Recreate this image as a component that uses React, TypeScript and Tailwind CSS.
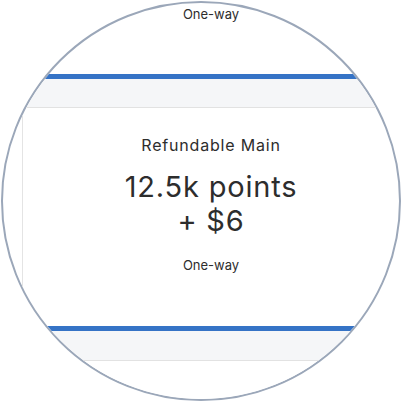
export default function App() {
  const font = { fontFamily: "Inter, 'Noto Sans', sans-serif" };
  return (
    <div className="h-[402px] w-[402px] bg-white p-px" style={font}>
      <div className="h-[400px] w-[400px] overflow-hidden rounded-full border-2 border-[#9ba7b9] bg-white text-[#2d2d2d]">
        {/* bottom of previous fare card */}
        <div className="ml-[19px] h-[71px] border-l border-[#e4e4e4] pt-[2px] text-center text-[13px] leading-[18px]">
          One-way
        </div>
        <div className="h-[5px] bg-[#3573c6]" />
        <div className="h-[29px] border-b border-[#e2e2e2] bg-[#f5f6f8]" />

        {/* fare card */}
        <div className="ml-[19px] flex h-[218px] flex-col items-center border-l border-[#e4e4e4] pt-[26px]">
          <div className="text-[16px] leading-[22px] tracking-[0.8px]">Refundable Main</div>
          <div className="mt-[14px] text-center text-[29px] leading-[34px] tracking-[0.8px]">
            <div>12.5k points</div>
            <div>+ $6</div>
          </div>
          <div className="mt-[18px] text-[13px] leading-[18px]">One-way</div>
        </div>

        <div className="h-[5px] bg-[#3573c6]" />
        <div className="h-[30px] border-b border-[#e2e2e2] bg-[#f5f6f8]" />
        <div className="h-[40px] bg-white" />
      </div>
    </div>
  );
}
